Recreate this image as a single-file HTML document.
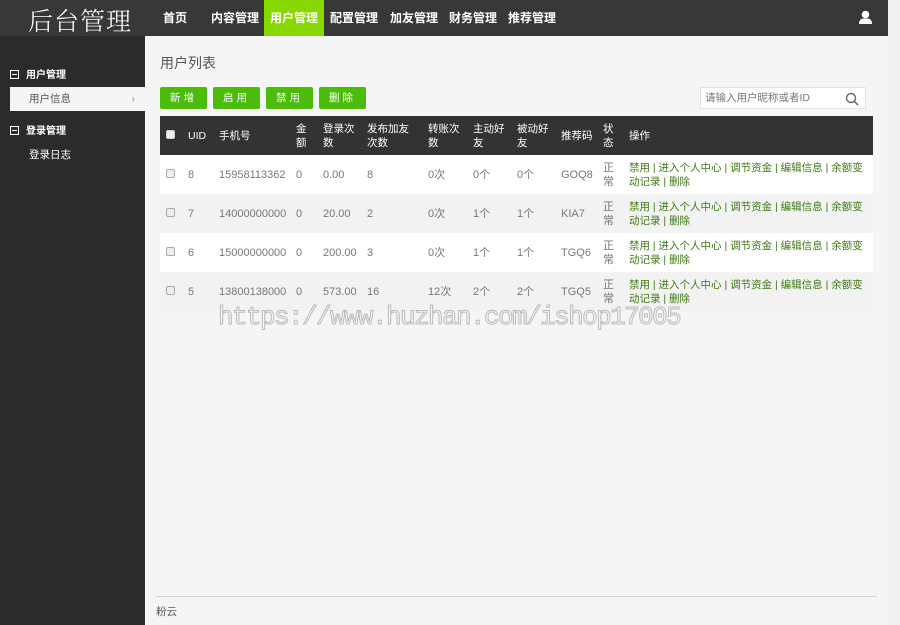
<!DOCTYPE html><html><head><meta charset="utf-8"><style>
*{margin:0;padding:0;box-sizing:border-box}
body{width:900px;height:625px;overflow:hidden;background:#f1f1f1;font-family:"Liberation Sans","Noto Sans CJK SC",sans-serif;font-size:11px;color:#666;position:relative}
.top{position:absolute;left:0;top:0;width:888px;height:36px;background:#383838}
.logo{position:absolute;left:28px;top:2px;font-size:25px;color:#fff;font-family:"Noto Serif CJK SC","Noto Sans CJK SC",serif;font-weight:300;letter-spacing:1px}
.nav a{position:absolute;top:0;height:36px;line-height:36px;color:#fff;font-weight:bold;font-size:12px;text-decoration:none}
.nav a.on{background:#87d700;}
.side{position:absolute;left:0;top:36px;width:145px;height:589px;background:#2b2b2b}
.side .g{position:absolute;left:10px;color:#fff;font-weight:bold;font-size:10px}
.side .g i{display:inline-block;width:9px;height:9px;border:1px solid #fff;position:relative;margin-right:7px;vertical-align:-1px}
.side .g i:after{content:"";position:absolute;left:1px;top:3px;width:5px;height:1px;background:#fff}
.side .it{position:absolute;left:10px;width:135px;height:24px;line-height:24px;padding-left:19px;color:#fff;font-size:10.5px}
.side .it.on{background:#f5f5f5;color:#555}
.main{position:absolute;left:145px;top:36px;width:743px;height:589px;background:#f5f5f5}
.btn{position:absolute;top:51px;height:22px;line-height:22px;width:47px;text-align:center;background:#4cbc0a;color:#fff;border-radius:2px;font-size:10.5px;letter-spacing:3px}
.srch{position:absolute;left:555px;top:51px;width:166px;height:22px;background:#fff;border:1px solid #e4e4e4;color:#777;font-size:10.5px;line-height:20px;padding-left:4px}
table{position:absolute;left:15px;top:80px;width:713px;border-collapse:collapse;table-layout:fixed}
td,th{font-weight:normal;text-align:left;vertical-align:middle;font-size:11px;line-height:14px;padding:0}
th{background:#333;color:#fff;height:39px;font-size:10.5px}
tr.w td{background:#fff}tr.g td{background:#f2f2f2}
td{height:39px;color:#777}
.cb{display:inline-block;width:9px;height:9px;border:1px solid #aaa;border-radius:2px;background:#eee;margin-left:6px}
th .cb{border-color:#ccc;background:#eee}
.op{color:#3b7a10;font-size:10.5px}
.wm{position:absolute;left:218px;top:302px;font-family:"Liberation Mono",monospace;font-size:26px;color:transparent;-webkit-text-stroke:1px #bbb;letter-spacing:-1.6px}
</style></head><body>
<div class="top"><div class="logo">后台管理</div>
<div class="nav"><a style="left:163px">首页</a><a style="left:211px">内容管理</a><a class="on" style="left:264px;width:60px;padding-left:6px">用户管理</a><a style="left:330px">配置管理</a><a style="left:390px">加友管理</a><a style="left:449px">财务管理</a><a style="left:508px">推荐管理</a></div>
<svg style="position:absolute;left:858px;top:10px" width="15" height="15" viewBox="0 0 15 15"><circle cx="7.5" cy="4.5" r="3.8" fill="#fff"/><path d="M1 14 Q1 9 5 8.5 L10 8.5 Q14 9 14 14Z" fill="#fff"/></svg>
</div>
<div class="side">
<div class="g" style="top:30px"><i></i>用户管理</div>
<div class="it on" style="top:51px">用户信息<span style="position:absolute;right:10px;color:#888">›</span></div>
<div class="g" style="top:86px"><i></i>登录管理</div>
<div class="it" style="top:107px">登录日志</div>
</div>
<div class="main">
<div style="position:absolute;left:15px;top:17px;font-size:14px;color:#555">用户列表</div>
<div class="btn" style="left:15px">新增</div><div class="btn" style="left:68px">启用</div><div class="btn" style="left:121px">禁用</div><div class="btn" style="left:174px">删除</div>
<div class="srch">请输入用户昵称或者ID<svg style="position:absolute;right:6px;top:4px" width="14" height="14" viewBox="0 0 14 14"><circle cx="6" cy="6" r="4.5" fill="none" stroke="#666" stroke-width="1.4"/><path d="M9.3 9.3L13 13" stroke="#666" stroke-width="1.5"/></svg></div>
<table>
<colgroup><col style="width:28px"><col style="width:31px"><col style="width:77px"><col style="width:27px"><col style="width:44px"><col style="width:61px"><col style="width:45px"><col style="width:44px"><col style="width:44px"><col style="width:42px"><col style="width:26px"><col></colgroup>
<tr><th><span class="cb"></span></th><th>UID</th><th>手机号</th><th>金<br>额</th><th>登录次<br>数</th><th>发布加友<br>次数</th><th>转账次<br>数</th><th>主动好<br>友</th><th>被动好<br>友</th><th>推荐码</th><th>状<br>态</th><th>操作</th></tr>
<tr class="w"><td><span class="cb"></span></td><td>8</td><td>15958113362</td><td>0</td><td>0.00</td><td>8</td><td>0次</td><td>0个</td><td>0个</td><td>GOQ8</td><td>正<br>常</td><td class="op">禁用 | 进入个人中心 | 调节资金 | 编辑信息 | 余额变<br>动记录 | 删除</td></tr>
<tr class="g"><td><span class="cb"></span></td><td>7</td><td>14000000000</td><td>0</td><td>20.00</td><td>2</td><td>0次</td><td>1个</td><td>1个</td><td>KIA7</td><td>正<br>常</td><td class="op">禁用 | 进入个人中心 | 调节资金 | 编辑信息 | 余额变<br>动记录 | 删除</td></tr>
<tr class="w"><td><span class="cb"></span></td><td>6</td><td>15000000000</td><td>0</td><td>200.00</td><td>3</td><td>0次</td><td>1个</td><td>1个</td><td>TGQ6</td><td>正<br>常</td><td class="op">禁用 | 进入个人中心 | 调节资金 | 编辑信息 | 余额变<br>动记录 | 删除</td></tr>
<tr class="g"><td><span class="cb"></span></td><td>5</td><td>13800138000</td><td>0</td><td>573.00</td><td>16</td><td>12次</td><td>2个</td><td>2个</td><td>TGQ5</td><td>正<br>常</td><td class="op">禁用 | 进入个人中心 | 调节资金 | 编辑信息 | 余额变<br>动记录 | 删除</td></tr>
</table>
<div style="position:absolute;left:11px;top:560px;width:721px;height:1px;background:#d4d4d4"></div>
<div style="position:absolute;left:11px;top:568px;font-size:10.5px;color:#555">粉云</div>
</div>
<div class="wm">https://www.huzhan.com/ishop17005</div>
</body></html>
